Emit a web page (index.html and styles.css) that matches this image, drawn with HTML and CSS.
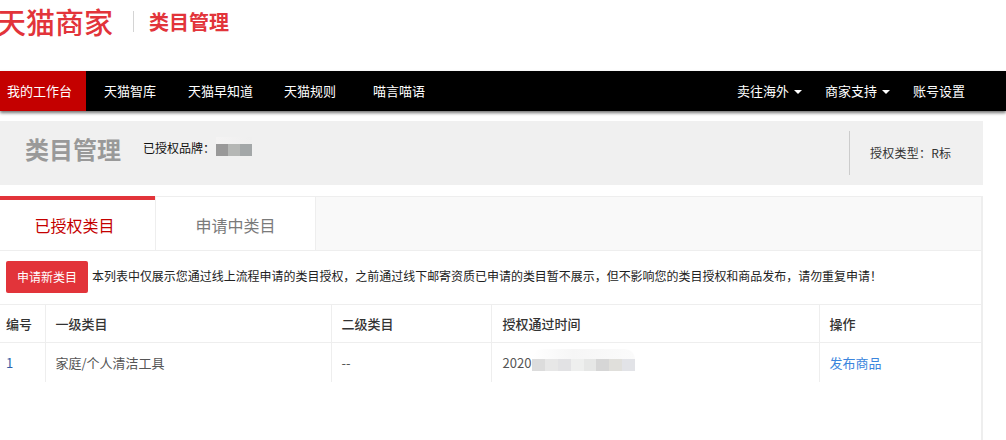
FILE: index.html
```html
<!DOCTYPE html>
<html lang="zh-CN">
<head>
<meta charset="utf-8">
<title>类目管理</title>
<link rel="stylesheet" href="styles.css">
</head>
<body>
<header class="brandbar">
  <span class="logo">天猫商家</span>
  <span class="brand-divider"></span>
  <span class="brand-title">类目管理</span>
</header>
<nav class="nav">
  <a class="nav-item nav-active">我的工作台</a>
  <a class="nav-item nav-w1">天猫智库</a>
  <a class="nav-item nav-w2">天猫早知道</a>
  <a class="nav-item nav-w3">天猫规则</a>
  <a class="nav-item nav-w4">喵言喵语</a>
  <div class="nav-right">
    <a class="nav-item nav-r1">卖往海外<i class="caret"></i></a>
    <a class="nav-item nav-r2">商家支持<i class="caret"></i></a>
    <a class="nav-item nav-r3">账号设置</a>
  </div>
</nav>
<section class="summary">
  <h1 class="summary-title">类目管理</h1>
  <div class="brand-line">已授权品牌：<span class="mosaic brand-mosaic"><i class="m-top"></i><i class="c1"></i><i class="c2"></i><i class="c3"></i></span></div>
  <div class="auth-type">授权类型：R标</div>
</section>
<section class="card">
  <div class="tabs">
    <div class="tab tab-active">已授权类目</div>
    <div class="tab tab-idle">申请中类目</div>
  </div>
  <div class="toolbar">
    <button class="apply-btn">申请新类目</button>
    <span class="notice">本列表中仅展示您通过线上流程申请的类目授权，之前通过线下邮寄资质已申请的类目暂不展示，但不影响您的类目授权和商品发布，请勿重复申请！</span>
  </div>
  <table class="grid">
    <colgroup><col class="col-a"><col class="col-b"><col class="col-c"><col class="col-d"><col class="col-e"></colgroup>
    <thead>
      <tr><th>编号</th><th>一级类目</th><th>二级类目</th><th class="time-head">授权通过时间</th><th>操作</th></tr>
    </thead>
    <tbody>
      <tr>
        <td class="num">1</td>
        <td>家庭/个人清洁工具</td>
        <td>--</td>
        <td class="time-td"><span class="time-cell">2020<span class="time-mosaic"><b class="time-haze"></b><i style="background:#dcdcdc"></i><i style="background:#e7e7e7"></i><i style="background:#e2e2e4"></i><i style="background:#eeefee"></i><i style="background:#e6e7e6"></i><i style="background:#d6d6d6"></i><i style="background:#e0dfdb"></i><i style="background:#e2e3e7"></i></span></span></td>
        <td><a class="link">发布商品</a></td>
      </tr>
    </tbody>
  </table>
</section>
</body>
</html>
```
FILE: styles.css
```css
* { box-sizing: border-box; }
html, body { margin: 0; padding: 0; }
body {
  width: 1006px;
  height: 440px;
  overflow: hidden;
  background: #fff;
  font-family: "Noto Sans CJK SC", "Liberation Sans", sans-serif;
  color: #000;
}
.brandbar {
  height: 71px;
  display: flex;
  align-items: flex-start;
}
.logo {
  margin-left: -3px;
  font-size: 29px;
  line-height: 42px;
  font-weight: 500;
  color: #e2343a;
  width: 116px;
  white-space: nowrap;
}
.brand-divider {
  width: 1px;
  height: 21px;
  margin: 11px 0 0 20px;
  background: #d4d4d4;
}
.brand-title {
  margin: 6px 0 0 15px;
  font-size: 20px;
  line-height: 32px;
  font-weight: 700;
  color: #e2343a;
}
.nav {
  height: 40px;
  display: flex;
  background: #000;
  box-shadow: 0 2px 3px rgba(0,0,0,.55);
  position: relative;
}
.nav-item {
  display: block;
  font-size: 13px;
  line-height: 40px;
  color: #fff;
  white-space: nowrap;
}
.nav-active { width: 86px; padding-left: 7px; background: #c40000; }
.nav-w1 { margin-left: 18px; }
.nav-w2 { margin-left: 32px; }
.nav-w3 { margin-left: 31px; }
.nav-w4 { margin-left: 37px; }
.nav-right { margin-left: auto; display: flex; padding-right: 41px; }
.nav-r2 { margin-left: 23px; }
.nav-r3 { margin-left: 23px; }
.caret {
  display: inline-block;
  width: 0;
  height: 0;
  margin-left: 5px;
  vertical-align: 2px;
  border-top: 4px solid #fff;
  border-left: 4px solid transparent;
  border-right: 4px solid transparent;
}
.summary {
  width: 983px;
  height: 64px;
  margin-top: 10px;
  background: #f0f0f0;
  display: flex;
  align-items: flex-start;
}
.summary-title {
  margin: 9px 0 0 25px;
  font-size: 24px;
  line-height: 38px;
  font-weight: 700;
  color: #999;
}
.brand-line {
  display: flex;
  align-items: flex-start;
  margin: 16px 0 0 22px;
  font-size: 12px;
  line-height: 22px;
  color: #111;
  white-space: nowrap;
}
.mosaic { display: grid; }
.brand-mosaic {
  grid-template-columns: repeat(3, 12px);
  grid-template-rows: 7px 12px;
  margin-left: 1px;
}
.mosaic i { display: block; }
.m-top {
  grid-column: 1 / 4;
  background: linear-gradient(90deg, #f4f3f3, #efefef);
}
.c1 { background: #999; }
.c2 { background: #b5b7b5; }
.c3 { background: #a3a7a8; }
.auth-type {
  margin-left: auto;
  width: 134px;
  height: 44px;
  margin-top: 10px;
  border-left: 1px solid #ccc;
  padding-left: 20px;
  font-size: 12px;
  letter-spacing: 0.25px;
  line-height: 44px;
  color: #333;
}
.card {
  width: 983px;
  height: 260px;
  margin-top: 11px;
  border-right: 2px solid #eee;
  background: #fff;
}
.tabs {
  height: 55px;
  display: flex;
  background: #f9f9f9;
  border-top: 1px solid #eee;
  border-bottom: 1px solid #eee;
}
.tab {
  font-size: 16px;
  text-align: center;
  background: #fff;
}
.tab-active {
  width: 155px;
  height: 54px;
  margin-top: -1px;
  padding-right: 6px;
  border-top: 4px solid #e2343a;
  line-height: 50px;
  color: #c40000;
}
.tab-idle {
  width: 161px;
  height: 53px;
  border-left: 1px solid #eee;
  border-right: 1px solid #eee;
  line-height: 57px;
  color: #7a7a7a;
}
.toolbar {
  height: 53px;
  display: flex;
  align-items: flex-start;
  padding: 10px 0 0 6px;
  width: 981px;
}
.apply-btn {
  width: 82px;
  height: 32px;
  padding: 0;
  border: 0;
  border-radius: 2px;
  background: #e2343a;
  color: #fff;
  font-family: inherit;
  font-size: 12px;
  line-height: 32px;
}
.notice {
  margin: 5px 0 0 4px;
  font-size: 11.97px;
  line-height: 20px;
  color: #222;
  white-space: nowrap;
}
.grid {
  width: 981px;
  table-layout: fixed;
  border-collapse: collapse;
  font-size: 13px;
  color: #555;
}
.col-a { width: 45px; }
.col-b { width: 286px; }
.col-c { width: 160px; }
.col-d { width: 328px; }
.col-e { width: 162px; }
.grid th, .grid td {
  padding: 0 0 0 10px;
  border-left: 1px solid #eee;
  border-right: 1px solid #eee;
  text-align: left;
  white-space: nowrap;
}
.grid th:first-child, .grid td:first-child { border-left: 0; padding-left: 6px; }
.grid .time-head, .grid .time-td { padding-left: 11px; }
.grid th {
  height: 38px;
  border-top: 1px solid #eee;
  border-bottom: 1px solid #eee;
  font-weight: 500;
  color: #333;
}
.grid td { height: 39px; }
.num { color: #2f5fa8; }
.time-cell { display: inline-flex; align-items: center; }
.time-mosaic {
  display: inline-grid;
  grid-template-columns: repeat(8, 12.8px);
  grid-template-rows: 10px 12px;
  margin: 0 0 4px 1px;
}
.time-haze { grid-column: 1 / 9; background: linear-gradient(90deg, #fff, #f6f6f6 40%, #fbfbfb); border-radius: 12px 12px 0 0; }
.time-mosaic i { display: block; }
.link { color: #3b85dd; }
```
